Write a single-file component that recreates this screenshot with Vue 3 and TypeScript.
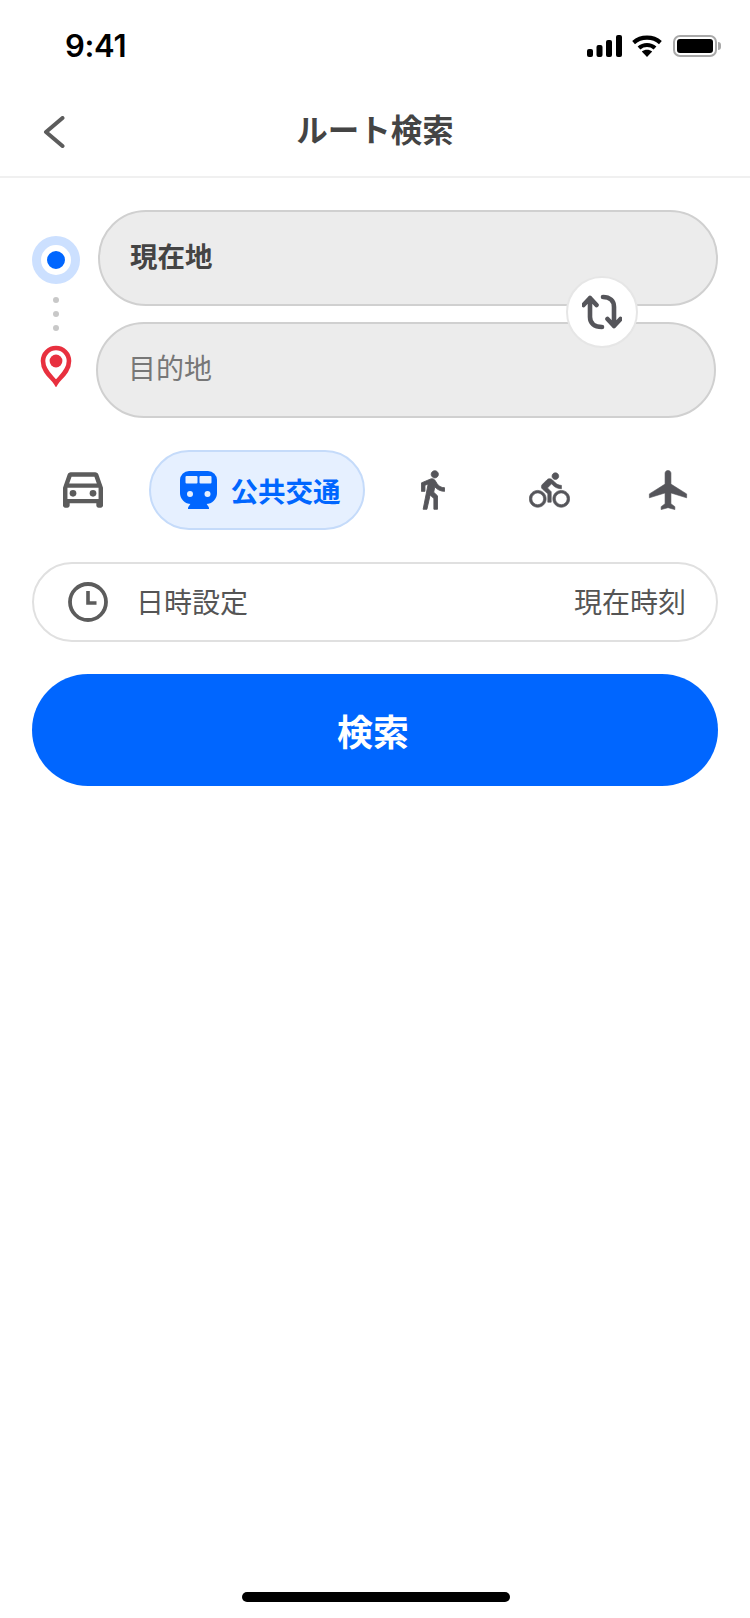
<script setup lang="ts">
type Mode = { id: string; box: string; w: number; h: number; d: string; sw: number };

const sideModes: Mode[] = [
  {
    id: "walk",
    box: "5.800 1.300 13.400 21.900",
    w: 24,
    h: 40,
    sw: 0.5,
    d: "M13.5 5.5c1.1 0 2-.9 2-2s-.9-2-2-2-2 .9-2 2 .9 2 2 2zM9.8 8.9L7 23h2.1l1.8-8 2.1 2v6h2v-7.5l-2.1-2 .6-3C14.8 12 16.8 13 19 13v-2c-1.9 0-3.5-1-4.3-2.4l-1-1.6c-.4-.6-1-1-1.7-1-.3 0-.5.1-.8.1L6 8.3V13h2V9.6l1.8-.7",
  },
  {
    id: "bike",
    box: "-0.200 1.300 24.400 20.900",
    w: 41,
    h: 36,
    sw: 0.4,
    d: "M15.5 5.5c1.1 0 2-.9 2-2s-.9-2-2-2-2 .9-2 2 .9 2 2 2zM5 12c-2.8 0-5 2.2-5 5s2.2 5 5 5 5-2.2 5-5-2.2-5-5-5zm0 8.5c-1.9 0-3.5-1.6-3.5-3.5s1.6-3.5 3.5-3.5 3.5 1.6 3.5 3.5-1.6 3.5-3.5 3.5zm5.8-10l2.4-2.4.8.8c1.3 1.3 3 2.1 5.1 2.1V9c-1.5 0-2.7-.6-3.6-1.5l-1.9-1.9c-.5-.4-1-.6-1.6-.6s-1.1.2-1.4.6L7.8 8.4c-.4.4-.6.9-.6 1.4 0 .6.2 1.1.6 1.4L11 14v5h2v-6.2l-2.2-2.3zM19 12c-2.8 0-5 2.2-5 5s2.2 5 5 5 5-2.2 5-5-2.2-5-5-5zm0 8.5c-1.9 0-3.5-1.6-3.5-3.5s1.6-3.5 3.5-3.5 3.5 1.6 3.5 3.5-1.6 3.5-3.5 3.5z",
  },
  {
    id: "plane",
    box: "1.800 1.800 19.400 20.400",
    w: 40,
    h: 40,
    sw: 0.3,
    d: "M21 16v-2l-8-5V3.5c0-.83-.67-1.5-1.5-1.5S10 2.67 10 3.5V9l-8 5v2l8-2.5V19l-2 1.5V22l3.5-1 3.5 1v-1.5L13 19v-5.5l8 2.5z",
  },
];
</script>

<template>
  <div class="screen">
    <div class="status-bar">
      <span class="time">9:41</span>
      <div class="status-icons">
        <svg width="35" height="22" viewBox="0 0 35 22" fill="#000">
          <rect x="0" y="14" width="6" height="8" rx="2" />
          <rect x="9.5" y="10" width="6" height="12" rx="2" />
          <rect x="19" y="5" width="6" height="17" rx="2" />
          <rect x="29" y="0" width="6" height="22" rx="2" />
        </svg>
        <svg width="30" height="22" viewBox="0 0 30 22" fill="none" stroke="#000" stroke-width="4.2">
          <path d="M1.6 7.6C9 1 21 1 28.4 7.6" />
          <path d="M7 13C11.5 9 18.5 9 23 13" />
          <path d="M15 22l-5.2-5.4c3-2.4 7.4-2.4 10.4 0z" fill="#000" stroke="none" />
        </svg>
        <div class="battery"><div class="battery-level"></div></div>
      </div>
    </div>

    <header class="nav">
      <button class="back" aria-label="戻る">
        <svg width="22" height="32" viewBox="0 0 22 32" fill="none" stroke="#5c5c5c" stroke-width="4" stroke-linecap="round" stroke-linejoin="round">
          <path d="M19.5 2L3 16l16.5 14" />
        </svg>
      </button>
      <h1>ルート検索</h1>
    </header>

    <section class="route">
      <div class="markers">
        <div class="origin-dot"><span></span></div>
        <div class="dots"><i></i><i></i><i></i></div>
        <svg width="32" height="42" viewBox="0 0 32 42">
          <path d="M16 38C13 33 3 27 3 16a13 13 0 0 1 26 0C29 27 19 33 16 38z" fill="#fff" stroke="#e8303f" stroke-width="4.6" />
          <circle cx="16" cy="16" r="6.4" fill="#e8303f" />
        </svg>
      </div>
      <div class="fields">
        <div class="field from">現在地</div>
        <div class="field to">目的地</div>
        <button class="swap" aria-label="入れ替え">
          <svg width="40" height="36" viewBox="0 0 40 36" fill="none" stroke="#55555a" stroke-width="4.6" stroke-linecap="round" stroke-linejoin="round">
            <path d="M20 33C12 33 8 29 8 23V4M1.500 11L8 4l6.500 7" />
            <path d="M21 3C28 3 32 7 32 13v19M25.500 25L32 32l6.500-7" />
          </svg>
        </button>
      </div>
    </section>

    <nav class="modes">
      <div class="mode car">
        <svg width="40" height="36" viewBox="3 5 18 16" fill="#5c5c5c">
          <path d="M18.92 6.010C18.720 5.420 18.160 5 17.500 5h-11c-.66 0-1.210.42-1.420 1.010L3 12v8c0 .55.45 1 1 1h1c.55 0 1-.45 1-1v-1h12v1c0 .55.45 1 1 1h1c.55 0 1-.45 1-1v-8l-2.080-5.990zM6.850 7h10.290l1.080 3.110H5.770L6.850 7zM19 17H5v-5h14v5z" />
          <circle cx="7.500" cy="14.500" r="1.500" />
          <circle cx="16.500" cy="14.500" r="1.500" />
        </svg>
      </div>
      <div class="mode active">
        <svg width="37" height="38" viewBox="0 0 37 38" fill="#0066ff">
          <path d="M9 0h19a9 9 0 0 1 9 9v13a11 11 0 0 1-11 11H11A11 11 0 0 1 0 22V9a9 9 0 0 1 9-9z" />
          <path d="M11 32h15l3 4.500V38H8v-1.500z" />
          <rect x="5.500" y="5" width="12" height="7.500" rx="1" fill="#e6f0ff" />
          <rect x="19.500" y="5" width="12" height="7.500" rx="1" fill="#e6f0ff" />
          <circle cx="10" cy="23" r="3" fill="#e6f0ff" />
          <circle cx="27.500" cy="23" r="3" fill="#e6f0ff" />
        </svg>
        <span>公共交通</span>
      </div>
      <div v-for="m in sideModes" :key="m.id" class="mode" :class="m.id">
        <svg :width="m.w" :height="m.h" :viewBox="m.box" fill="#55555a">
          <path :d="m.d" stroke="#55555a" :stroke-width="m.sw" stroke-linejoin="round" />
        </svg>
      </div>
    </nav>

    <div class="datetime">
      <svg width="40" height="40" viewBox="0 0 40 40" fill="none" stroke="#5c5c5c" stroke-width="3.800">
        <circle cx="20" cy="20" r="18" />
        <path d="M20 9v12h8.500" stroke-width="3.600" />
      </svg>
      <span class="dt-label">日時設定</span>
      <span class="dt-value">現在時刻</span>
    </div>

    <button class="search">検索</button>

    <div class="home-indicator"></div>
  </div>
</template>

<style scoped>
.screen {
  min-height: 1618px;
  display: flex;
  flex-direction: column;
  background: #fff;
  font-family: "Noto Sans CJK JP", "Noto Sans", sans-serif;
  color: #444;
  overflow: hidden;
}

.status-bar {
  height: 88px;
  display: flex;
  justify-content: space-between;
  align-items: flex-start;
  padding: 35px 33px 0 65px;
  box-sizing: border-box;
}

.time {
  font-family: Inter, "Liberation Sans", sans-serif;
  font-size: 31px;
  font-weight: 600;
  line-height: 22px;
  letter-spacing: -0.3px;
  color: #000;
}

.status-icons {
  display: flex;
  align-items: flex-start;
  gap: 10px;
}

.battery {
  position: relative;
  width: 44px;
  height: 22px;
  margin-left: 1px;
  box-sizing: border-box;
  border: 2px solid #a9a9a9;
  border-radius: 7px;
  padding: 2px;
}

.battery::after {
  content: "";
  position: absolute;
  right: -6px;
  top: 5px;
  width: 3px;
  height: 8px;
  border-radius: 0 3px 3px 0;
  background: #a9a9a9;
}

.battery-level {
  height: 100%;
  background: #000;
  border-radius: 3px;
}

.nav {
  position: relative;
  height: 90px;
  display: flex;
  align-items: center;
  justify-content: center;
  border-bottom: 2px solid #f0f0f0;
  box-sizing: border-box;
  padding-bottom: 8px;
}

.nav h1 {
  margin: 0;
  font-size: 31.5px;
  font-weight: 700;
  line-height: 44px;
  color: #444;
}

.back {
  position: absolute;
  left: 43px;
  top: 28px;
  padding: 0;
  border: 0;
  background: none;
  line-height: 0;
}

.route {
  display: flex;
  padding: 32px 32px 0;
}

.markers {
  width: 48px;
  padding-top: 26px;
  display: flex;
  flex-direction: column;
  align-items: center;
}

.origin-dot {
  width: 48px;
  height: 48px;
  border-radius: 50%;
  background: #cce0ff;
  display: flex;
  align-items: center;
  justify-content: center;
}

.origin-dot span {
  width: 18px;
  height: 18px;
  border-radius: 50%;
  background: #0066ff;
  border: 6px solid #fff;
}

.dots {
  display: flex;
  flex-direction: column;
  gap: 8px;
  margin: 13px 0 14px;
}

.dots i {
  display: block;
  width: 6px;
  height: 6px;
  border-radius: 50%;
  background: #c8c8c8;
}

.fields {
  position: relative;
  margin-left: 18px;
  display: flex;
  flex-direction: column;
  gap: 16px;
}

.field {
  width: 620px;
  height: 96px;
  box-sizing: border-box;
  border: 2px solid #d0d0d0;
  border-radius: 48px;
  background: #ececec;
  padding: 0 30px;
  font-size: 28px;
  line-height: 86px;
}

.from {
  font-size: 27.5px;
  font-weight: 700;
  color: #444;
}

.to {
  margin-left: -2px;
  color: #777;
}

.swap {
  position: absolute;
  left: 468px;
  top: 66px;
  width: 72px;
  height: 72px;
  box-sizing: border-box;
  border-radius: 50%;
  border: 2px solid #e6e6e6;
  background: #fff;
  padding: 0;
  display: flex;
  align-items: center;
  justify-content: center;
}

.modes {
  display: flex;
  gap: 16px;
  padding: 32px 32px 0;
  height: 80px;
}

.mode {
  display: flex;
  align-items: center;
  justify-content: center;
  flex-shrink: 0;
  box-sizing: border-box;
}

.car {
  width: 101px;
}

.active {
  width: 216px;
  border: 2px solid #c5dbfa;
  border-radius: 40px;
  background: #e6f0ff;
  gap: 14px;
  color: #0066ff;
  font-size: 27.5px;
  font-weight: 700;
  padding-left: 6px;
}

.walk {
  width: 104px;
}

.bike {
  width: 97px;
}

.plane {
  width: 108px;
}

.datetime {
  margin: 32px 32px 0;
  height: 80px;
  box-sizing: border-box;
  border: 2px solid #e0e0e0;
  border-radius: 40px;
  display: flex;
  align-items: center;
  padding: 0 30px 2px 34px;
  font-size: 28px;
  color: #555;
}

.datetime svg {
  margin-top: 2px;
}

.dt-label {
  margin-left: 28px;
}

.dt-value {
  margin-left: auto;
}

.search {
  margin: 32px 32px 0;
  height: 112px;
  border: 0;
  border-radius: 56px;
  background: #0066ff;
  color: #fff;
  font-family: inherit;
  font-size: 36px;
  font-weight: 700;
  padding: 0 4px 0 0;
}

.home-indicator {
  width: 268px;
  height: 10px;
  margin: auto 0 16px 242px;
  border-radius: 5px;
  background: #000;
}
</style>
